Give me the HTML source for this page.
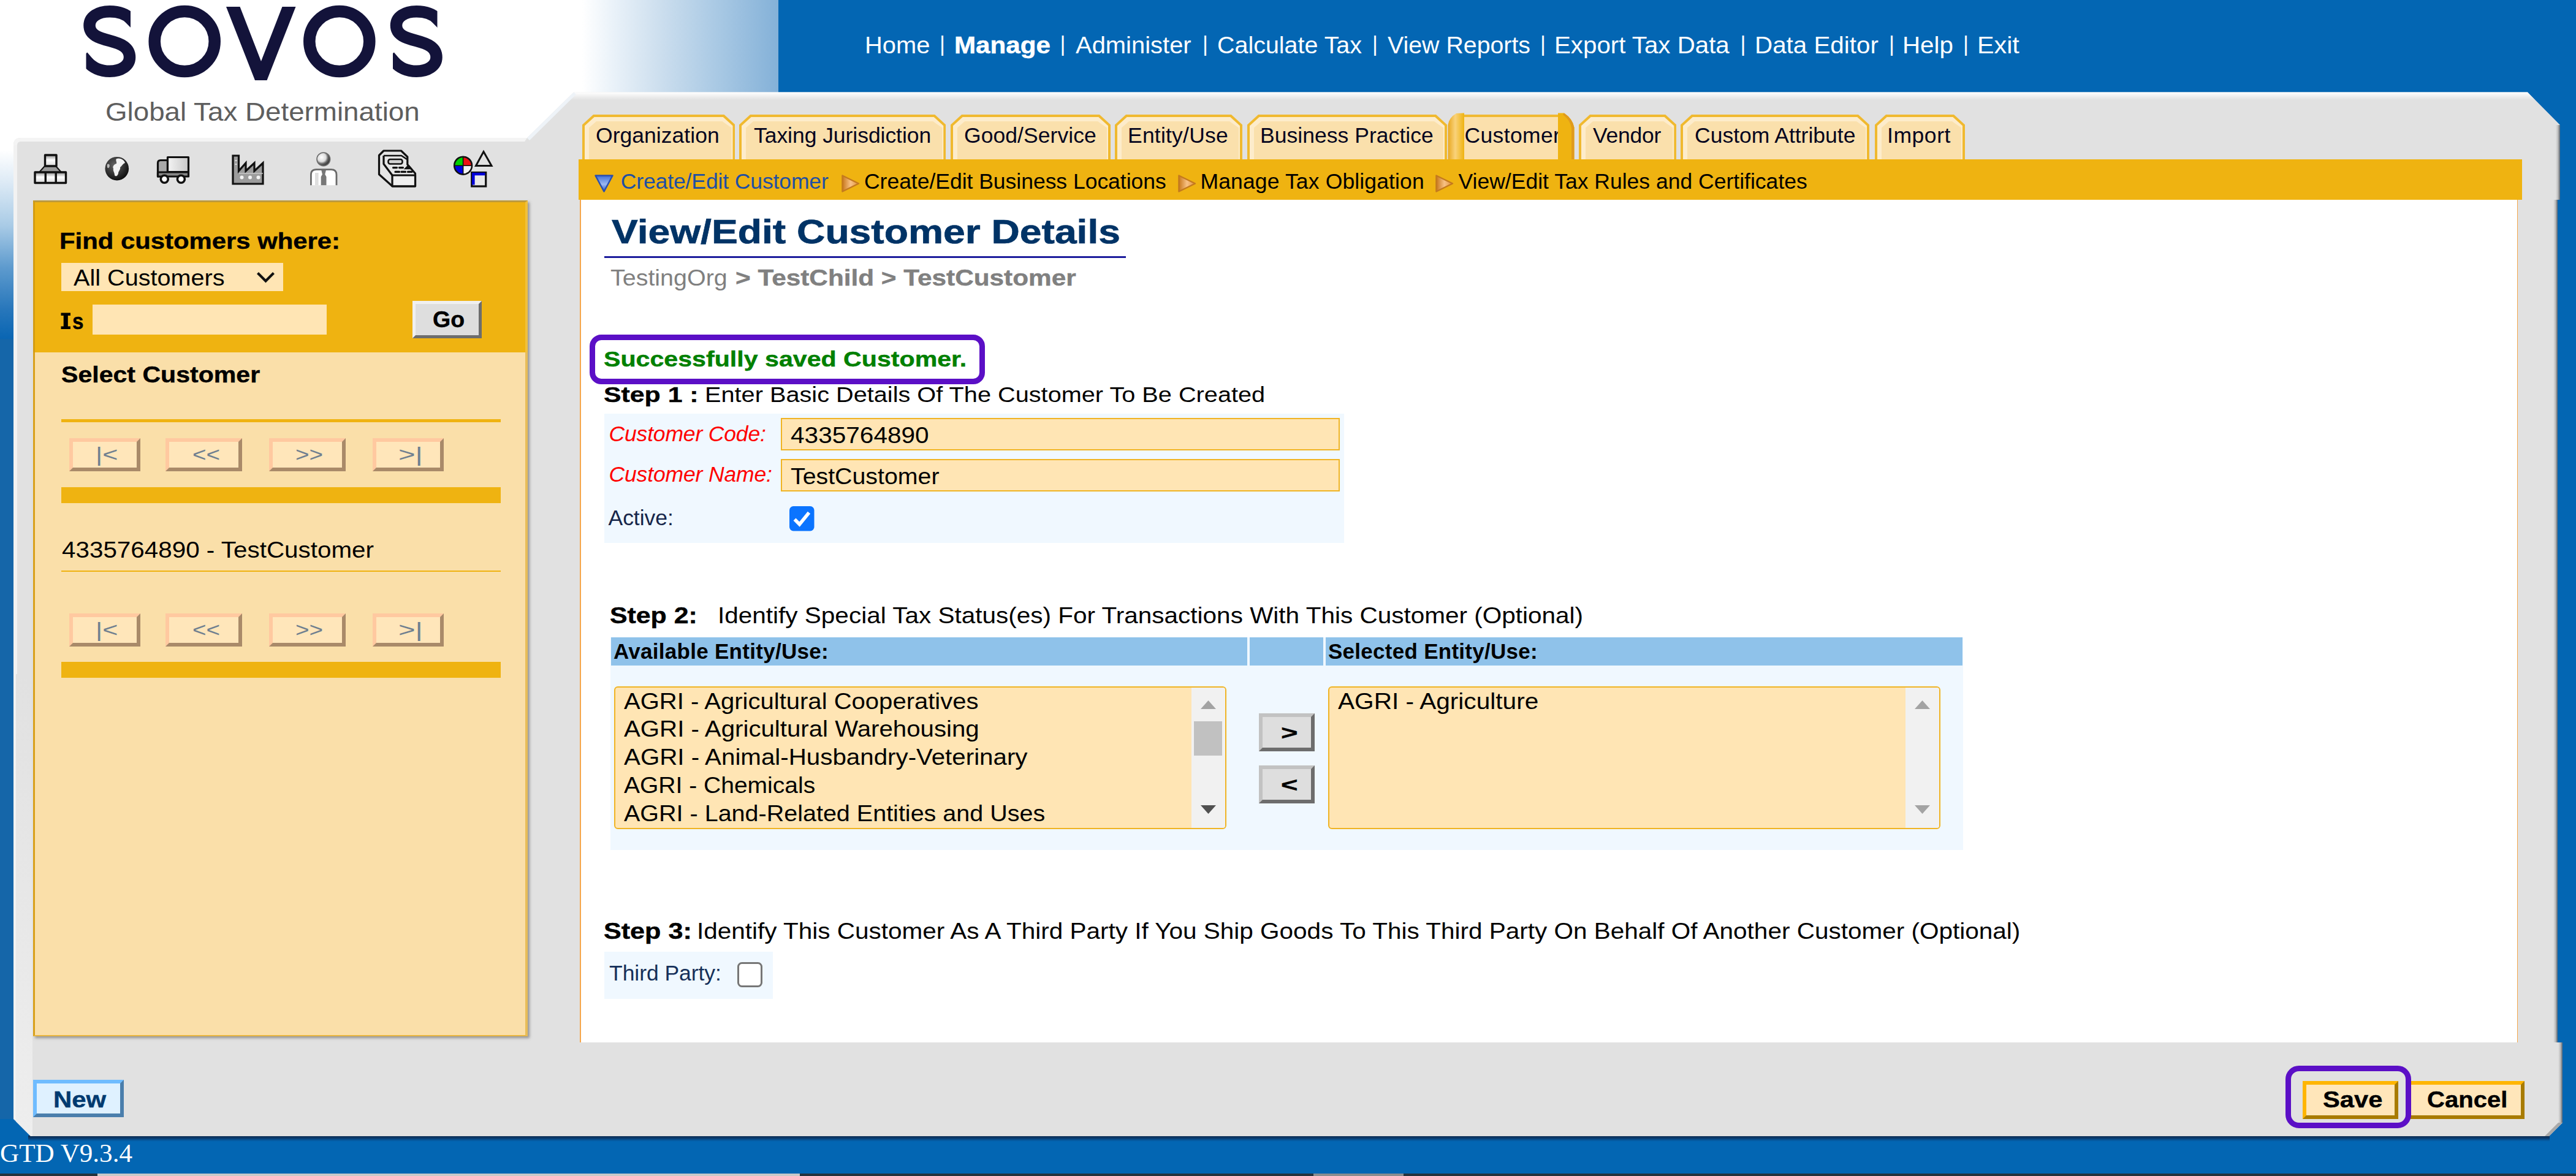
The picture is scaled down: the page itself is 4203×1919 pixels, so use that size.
<!DOCTYPE html>
<html><head><meta charset="utf-8"><title>Sovos GTD - View/Edit Customer Details</title>
<style>
html,body{margin:0;padding:0}
body{background:#0366b3;font-family:"Liberation Sans",sans-serif}
#root{width:4203px;height:1919px;overflow:hidden;position:relative;background:#0366b3}
.a{position:absolute;box-sizing:border-box}
.t{position:absolute;white-space:pre;line-height:1;transform-origin:0 50%;font-family:"Liberation Sans",sans-serif}
.tab{position:absolute;box-sizing:border-box;top:187px;height:73px;background:#fbe0ac;border:3px solid #f0b932;border-bottom:none;border-radius:14px 14px 0 0;box-shadow:inset 3px 3px 0 #fdedcc,inset -3px 0 0 #fdedcc}
.pb{position:absolute;box-sizing:border-box;height:54px;background:#ffe6ba;border:6px solid;border-color:#ffc9a0 #a98a69 #a98a69 #ffc9a0}
.gb{position:absolute;box-sizing:border-box;background:#dedede;border:6px solid;border-color:#c2c2c2 #6d6d6d #6d6d6d #c2c2c2}
.inp{position:absolute;box-sizing:border-box;background:#ffe5b4;border:2.5px solid #f0b424}
.lb{position:absolute;box-sizing:border-box;background:#ffe5b4;border:2.5px solid #f0b424;border-radius:6px;overflow:hidden}
</style></head><body><div id="root">
<!-- header / backgrounds -->
<div class="a" style="left:0;top:0;width:1270px;height:151px;background:linear-gradient(to right,#fff 0,#fff 950px,#eaf2f9 1000px,#cfe0ef 1070px,#a9c9e4 1170px,#84b1d8 1270px)"></div>
<div class="a" style="left:0;top:150px;width:960px;height:1676px;background:linear-gradient(to bottom,#fff 0,#fff 95px,#dbe9f5 150px,#a9cbe6 218px,#5e9bce 286px,#2877bb 354px,#0a66b3 402px,#1566a9 405px,#1566a9 100%)"></div>
<!-- main grey panel -->
<svg class="a" style="left:0;top:0" width="4203" height="1919" viewBox="0 0 4203 1919">
<defs>
<linearGradient id="sh" x1="0" y1="0" x2="0" y2="1"><stop offset="0" stop-color="#0e2646" stop-opacity="1"/><stop offset=".5" stop-color="#0a3566" stop-opacity=".8"/><stop offset="1" stop-color="#0a4a8a" stop-opacity="0"/></linearGradient>
<linearGradient id="hl" x1="0" y1="0" x2="0" y2="1"><stop offset="0" stop-color="#fff"/><stop offset="1" stop-color="#e1e1e1"/></linearGradient>
</defs>
<rect x="46" y="1853" width="4114" height="10" fill="url(#sh)"/>
<path d="M34,225 L860,225 L936,150.5 L4124,150.5 L4177,204 L4177,326 L4173,326 L4173,1701 L4181,1701 L4181,1832 L4159,1854 L50,1854 L22,1826 L22,237 Q22,225 34,225 Z" fill="#e1e1e1"/>
<path d="M936,150.5 L4124,150.5 L4136,163 L924,163 Z" fill="url(#hl)"/>
<linearGradient id="re" x1="0" y1="0" x2="1" y2="0"><stop offset="0" stop-color="#e1e1e1"/><stop offset=".5" stop-color="#bdbdbd"/><stop offset="1" stop-color="#5e6670"/></linearGradient>
<rect x="4170" y="204" width="7" height="122" fill="url(#re)"/><rect x="4166" y="326" width="7" height="1375" fill="url(#re)"/><rect x="4174" y="1701" width="7" height="131" fill="url(#re)"/>
<path d="M4181,1832 L4159,1854 L4152,1854 L4174,1832 Z" fill="#a9a9a9"/>
<path d="M34,225 L860,225 L856,231 L34,231 Q28,231 28,237 L22,237 Q22,225 34,225 Z" fill="#f4f4f4"/>
<path d="M860,225 L936,150.5 L940,154 L864,229 Z" fill="#eef3f8"/>
<path d="M22,237 L28,237 L28,1830 L22,1826 Z" fill="#f2f2f2"/>
<linearGradient id="lg2" x1="0" y1="0" x2="0" y2="1"><stop offset="0" stop-color="#e1e1e1"/><stop offset="1" stop-color="#eeeeee"/></linearGradient>
<path d="M26,1100 L53,1100 L53,1854 L50,1854 L26,1830 Z" fill="url(#lg2)"/>
</svg>
<!-- bottom window strip -->
<div class="a" style="left:0;top:1915px;width:4203px;height:4px;background:#26333d"></div>
<div class="a" style="left:159px;top:1915px;width:1146px;height:4px;background:#c9c9c9"></div>
<div class="a" style="left:2143px;top:1915px;width:147px;height:4px;background:#8a8d90"></div>
<svg class="a" style="left:120px;top:0" width="640" height="145" viewBox="120 0 640 145">
<defs><clipPath id="sc"><rect x="130" y="0" width="83" height="67"/><rect x="140.5" y="67" width="90" height="70"/></clipPath>
<path id="sS" clip-path="url(#sc)" d="M221,39 L213,31 C204,21 192,18.7 179,18.7 C160,18.7 146,27.5 146,41.5 C146,57 161,62 179,66.5 C198,71.5 211.5,77.5 211.5,93.5 C211.5,107.5 197,116.3 179,116.3 C164,116.3 151,110.5 142,100 L135,92"/></defs>
<g fill="none" stroke="#13133a" stroke-width="19.5">
<use href="#sS"/>
<circle cx="301.2" cy="67.5" r="49"/>
<circle cx="553.8" cy="67.5" r="49"/>
<use href="#sS" x="500.5"/>
</g>
<path d="M369,11 L391.5,11 L426,100 L460.5,11 L482.5,11 L435.5,131 L416,131 Z" fill="#13133a"/>
</svg>

<!-- toolbar icons -->
<svg class="a" style="left:50px;top:240px" width="770" height="72" viewBox="50 240 770 72">
<defs>
<linearGradient id="bx" x1="0" y1="0" x2="0" y2="1"><stop offset="0" stop-color="#8c8c8c"/><stop offset=".45" stop-color="#fff"/><stop offset="1" stop-color="#d8d8d8"/></linearGradient>
<radialGradient id="gl" cx=".4" cy=".35" r=".7"><stop offset="0" stop-color="#666"/><stop offset="1" stop-color="#0a0a0a"/></radialGradient>
<radialGradient id="hd" cx=".36" cy=".36" r=".78"><stop offset="0" stop-color="#fff"/><stop offset=".42" stop-color="#dcdcdc"/><stop offset=".62" stop-color="#666"/><stop offset="1" stop-color="#0c0c0c"/></radialGradient>
<linearGradient id="cg" x1="0" y1="0" x2="1" y2="0"><stop offset="0" stop-color="#f4f4f4"/><stop offset="1" stop-color="#c8c8c8"/></linearGradient>
</defs>
<!-- 1 org chart -->
<g stroke="#111" stroke-width="3.4" stroke-linejoin="round">
<path d="M73,271 L64,281 L100,281 L91,271 Z" fill="#9a9a9a" stroke-width="2"/>
<rect x="73.5" y="253" width="18.5" height="18" fill="url(#bx)"/>
<rect x="57" y="281" width="50.5" height="17.5" fill="url(#bx)"/>
<path d="M74.3,281 V298.5 M91.2,281 V298.5" fill="none"/>
</g>
<!-- 2 globe -->
<circle cx="190.8" cy="275.2" r="19.3" fill="url(#gl)"/>
<path d="M190,259 C196,257 203,261 204,266 C200,267 199,271 196,273 C197,277 193,279 193,283 C192,287 189,289 187,286 C187,281 184,279 185,275 C183,272 186,268 190,267 C191,264 188,262 190,259 Z" fill="#f2f2f2"/>
<path d="M175,268 C178,266 180,270 178,273 C176,276 174,273 175,268 Z" fill="#bbb"/>
<!-- 3 truck -->
<g stroke="#111" stroke-width="3.2" stroke-linejoin="round">
<path d="M257.5,288 L257.5,266 Q257.5,261.5 262,261.5 L273.5,261.5 L273.5,288 Z" fill="#a8a8a8"/>
<rect x="273.5" y="256.5" width="34" height="24" fill="url(#cg)"/>
<path d="M257.5,281 L307.5,281 L307.5,288 L257.5,288 Z" fill="#888"/>
<circle cx="268.3" cy="292.3" r="6" fill="#fff" stroke-width="3.6"/>
<circle cx="295.4" cy="292.3" r="6" fill="#fff" stroke-width="3.6"/>
</g>
<!-- 4 factory -->
<g stroke="#111" stroke-width="3.2" stroke-linejoin="miter">
<path d="M380,300 L380,254 L389.5,254 L389.5,279 L401,266 L401,279 L415,266 L415,279 L429,266 L429,300 Z" fill="#9c9c9c"/>
</g>
<path d="M383.5,262 h3 M383.5,268 h3" stroke="#ddd" stroke-width="2"/>
<g fill="#f4f4f4"><circle cx="394.5" cy="289.5" r="3"/><circle cx="408" cy="289.5" r="3"/><circle cx="421.5" cy="289.5" r="3"/></g>
<path d="M390,283 L429,283" stroke="#c8c8c8" stroke-width="1.6"/>
<!-- 5 person -->
<circle cx="527.8" cy="259.8" r="10.8" fill="url(#hd)" stroke="#6a6a6a" stroke-width="1.6"/>
<path d="M507.4,302.3 L507.4,285 Q507.4,276.6 516,276.6 L540.4,276.6 Q549,276.6 549,285 L549,302.3" fill="#fff" stroke="#6a6a6a" stroke-width="2.8"/>
<rect x="514" y="282" width="5.6" height="20.3" fill="#dedede"/>
<path d="M524.3,277.8 h7.6 l-1.6,6.6 l2.2,4.2 v13.7 h-8.8 v-13.7 l2.2,-4.2 Z" fill="#777"/>
<!-- 6 cash register -->
<g stroke="#111" stroke-width="3.2" stroke-linejoin="round" fill="#e6e6e6">
<path d="M618.5,253.5 L626,246 L654.5,246 L664.8,256 L664.8,268.5 L677.5,283 L677.5,303.8 L640,303.8 L618.5,284.5 Z"/>
<path d="M626,254 L626,267.5 L640,286" fill="none"/>
<path d="M626,254 L655,254 L664,260" fill="none" stroke-width="2.6"/>
<path d="M626,267.5 L664.8,268.5" fill="none" stroke-width="0"/>
<rect x="640" y="286" width="37.5" height="17.8" fill="#efefef"/>
<rect x="633.5" y="260" width="23" height="7.5" rx="3" fill="#d4d4d4" stroke-width="2.6"/>
</g>
<path d="M641.5,273.6 h6 M651.5,273.6 h6 M662.5,274.6 l4,-4 l3.5,4 Z M645,280.4 h6.5 M655,280.4 h6.5 M665.5,280.4 h6.5" stroke="#111" stroke-width="3.2" stroke-linecap="round" fill="#111"/>
<!-- 7 shapes -->
<g stroke="#111" stroke-width="2.6">
<path d="M755.6,270.2 L755.6,255.8 A14.4,14.4 0 0 0 741.2,270.2 Z" fill="#00d000" stroke="none"/>
<path d="M755.6,270.2 L770,270.2 A14.4,14.4 0 0 0 755.6,255.8 Z" fill="#ee1111" stroke="none"/>
<path d="M755.6,270.2 L741.2,270.2 A14.4,14.4 0 0 0 755.6,284.6 Z" fill="#0000e0" stroke="none"/>
<path d="M755.6,270.2 L755.6,284.6 A14.4,14.4 0 0 0 770,270.2 Z" fill="#f2f2f2" stroke="none"/>
<circle cx="755.6" cy="270.2" r="14.4" fill="none"/>
<path d="M755.6,256 V284.5 M741.5,270.2 H770" stroke-width="1.6"/>
<path d="M789,247.5 L802,270.5 L776.5,270.5 Z" fill="#e1e1e1" stroke-width="3"/>
<rect x="769.7" y="281.5" width="23" height="22.5" fill="#e9e9e9" stroke-width="3.2"/>
<path d="M772.3,301.5 V284 H791.5" fill="none" stroke="#0000d8" stroke-width="4.6"/>
</g>
</svg>

<!-- find / select panel -->
<div class="a" style="left:54px;top:327px;width:807px;height:1364px;background:#fadfa9;box-shadow:3px 3px 4px rgba(90,90,90,.55);border-left:3px solid #d9a01a;border-bottom:2px solid #e9b540;border-right:4px solid #e8bd58"></div>
<div class="a" style="left:54px;top:327px;width:807px;height:248px;background:#efb311;border-left:3px solid #d39c12;border-top:3px solid #bd9a3c;border-right:4px solid #f0c03c"></div>
<div class="a" style="left:100px;top:429px;width:362px;height:46px;background:#ffe5b4"></div>
<svg class="a" style="left:415px;top:440px" width="40" height="26" viewBox="0 0 40 26"><path d="M5.5,5.5 L18.5,18.5 L31.5,5.5" fill="none" stroke="#111" stroke-width="4.2"/></svg>
<div class="a" style="left:151px;top:497px;width:382px;height:49px;background:#ffe5b4"></div>
<div class="gb" style="left:673px;top:491px;width:113px;height:61px;border-width:5px;border-color:#f0f0f0 #6d6d6d #6d6d6d #f0f0f0"></div>
<div class="a" style="left:100px;top:684px;width:717px;height:5px;background:#efb311"></div>
<div class="pb" style="left:113px;top:715px;width:116px"></div>
<div class="pb" style="left:270px;top:715px;width:125px"></div>
<div class="pb" style="left:439px;top:715px;width:125px"></div>
<div class="pb" style="left:608px;top:715px;width:116px"></div>
<div class="a" style="left:100px;top:795px;width:717px;height:26px;background:#efb311"></div>
<div class="a" style="left:100px;top:931px;width:717px;height:2px;background:#efb311"></div>
<div class="pb" style="left:113px;top:1001px;width:116px"></div>
<div class="pb" style="left:270px;top:1001px;width:125px"></div>
<div class="pb" style="left:439px;top:1001px;width:125px"></div>
<div class="pb" style="left:608px;top:1001px;width:116px"></div>
<div class="a" style="left:100px;top:1080px;width:717px;height:26px;background:#efb311"></div>
<!-- New button -->
<div class="a" style="left:54px;top:1762px;width:148px;height:61px;background:#dff1ff;border:6px solid;border-color:#6fbcff #4a7eac #4a7eac #6fbcff"></div>
<svg class="a" style="left:98px;top:509px" width="20" height="30" viewBox="98 509 20 30"><path d="M99.5,510.5 H115 V515 H110.8 V532.5 H115 V537 H99.5 V532.5 H103.7 V515 H99.5 Z" fill="#000"/></svg>

<!-- tabs -->
<svg class="a" style="left:949.5px;top:186.5px" width="249.5" height="73.5"><polygon points="0,73.5 0,16.5 18,0 231.5,0 249.5,16.5 249.5,73.5" fill="#f0b92f"/><polygon points="4,73.5 4,18.2 19.7,4 229.8,4 245.5,18.2 245.5,73.5" fill="#fdeccb"/><polygon points="11,73.5 11,21.5 23,11 228.5,11 243.5,21.5 243.5,73.5" fill="#fae0ac"/></svg>
<svg class="a" style="left:1205.7px;top:186.5px" width="337.3" height="73.5"><polygon points="0,73.5 0,16.5 18,0 319.3,0 337.3,16.5 337.3,73.5" fill="#f0b92f"/><polygon points="4,73.5 4,18.2 19.7,4 317.6,4 333.3,18.2 333.3,73.5" fill="#fdeccb"/><polygon points="11,73.5 11,21.5 23,11 316.3,11 331.3,21.5 331.3,73.5" fill="#fae0ac"/></svg>
<svg class="a" style="left:1550.5px;top:186.5px" width="261.0" height="73.5"><polygon points="0,73.5 0,16.5 18,0 243.0,0 261.0,16.5 261.0,73.5" fill="#f0b92f"/><polygon points="4,73.5 4,18.2 19.7,4 241.3,4 257.0,18.2 257.0,73.5" fill="#fdeccb"/><polygon points="11,73.5 11,21.5 23,11 240.0,11 255.0,21.5 255.0,73.5" fill="#fae0ac"/></svg>
<svg class="a" style="left:1819px;top:186.5px" width="208.0" height="73.5"><polygon points="0,73.5 0,16.5 18,0 190.0,0 208.0,16.5 208.0,73.5" fill="#f0b92f"/><polygon points="4,73.5 4,18.2 19.7,4 188.3,4 204.0,18.2 204.0,73.5" fill="#fdeccb"/><polygon points="11,73.5 11,21.5 23,11 187.0,11 202.0,21.5 202.0,73.5" fill="#fae0ac"/></svg>
<svg class="a" style="left:2034.5px;top:186.5px" width="326.0" height="73.5"><polygon points="0,73.5 0,16.5 18,0 308.0,0 326.0,16.5 326.0,73.5" fill="#f0b92f"/><polygon points="4,73.5 4,18.2 19.7,4 306.3,4 322.0,18.2 322.0,73.5" fill="#fdeccb"/><polygon points="11,73.5 11,21.5 23,11 305.0,11 320.0,21.5 320.0,73.5" fill="#fae0ac"/></svg>
<svg class="a" style="left:2575.7px;top:186.5px" width="159.3" height="73.5"><polygon points="0,73.5 0,16.5 18,0 141.3,0 159.3,16.5 159.3,73.5" fill="#f0b92f"/><polygon points="4,73.5 4,18.2 19.7,4 139.6,4 155.3,18.2 155.3,73.5" fill="#fdeccb"/><polygon points="11,73.5 11,21.5 23,11 138.3,11 153.3,21.5 153.3,73.5" fill="#fae0ac"/></svg>
<svg class="a" style="left:2742px;top:186.5px" width="308.0" height="73.5"><polygon points="0,73.5 0,16.5 18,0 290.0,0 308.0,16.5 308.0,73.5" fill="#f0b92f"/><polygon points="4,73.5 4,18.2 19.7,4 288.3,4 304.0,18.2 304.0,73.5" fill="#fdeccb"/><polygon points="11,73.5 11,21.5 23,11 287.0,11 302.0,21.5 302.0,73.5" fill="#fae0ac"/></svg>
<svg class="a" style="left:3059px;top:186.5px" width="147.0" height="73.5"><polygon points="0,73.5 0,16.5 18,0 129.0,0 147.0,16.5 147.0,73.5" fill="#f0b92f"/><polygon points="4,73.5 4,18.2 19.7,4 127.3,4 143.0,18.2 143.0,73.5" fill="#fdeccb"/><polygon points="11,73.5 11,21.5 23,11 126.0,11 141.0,21.5 141.0,73.5" fill="#fae0ac"/></svg>
<!-- active tab -->
<div class="a" style="left:2385px;top:187px;width:160px;height:73px;background:#fbe0ac;border-top:4px solid #f0b932"></div>
<svg class="a" style="left:2360px;top:182px;z-index:2" width="212" height="78" viewBox="0 0 212 78">
<defs><linearGradient id="ag" x1="0" y1="0" x2="1" y2="0"><stop offset="0" stop-color="#e9a820"/><stop offset=".45" stop-color="#f9d27a"/><stop offset="1" stop-color="#efb311"/></linearGradient></defs>
<path d="M2.5,78 L2.5,22 Q4,10 16,3 L29,2.5 L29,78 Z" fill="url(#ag)"/>
<path d="M182,78 L182,2.5 L192,2.5 Q206,12 208.5,26 L208.5,78 Z" fill="#efb311"/>
<path d="M192,2.5 Q206,12 208.5,26 L208.5,78 L204,78 L204,27 Q202,14 190,5 Z" fill="#e09a1c"/>
</svg>
<!-- gold sub-nav bar -->
<div class="a" style="left:944px;top:260px;width:3170.5px;height:66px;background:#efb311"></div>
<svg class="a" style="left:968px;top:283px" width="36" height="34" viewBox="0 0 36 34">
<defs><linearGradient id="bt" x1="0" y1="0" x2="0" y2="1"><stop offset="0" stop-color="#3f6fd6"/><stop offset=".55" stop-color="#9db9f2"/><stop offset="1" stop-color="#2c56b8"/></linearGradient></defs>
<path d="M3.5,3.5 L31.5,3.5 L17.5,29.5 Z" fill="url(#bt)" stroke="#2a4fae" stroke-width="2.5" stroke-linejoin="round"/></svg>
<svg width="0" height="0" style="position:absolute"><defs>
<linearGradient id="ot" x1="0" y1="0" x2="1" y2="0"><stop offset="0" stop-color="#c9781c"/><stop offset=".5" stop-color="#f8c184"/><stop offset="1" stop-color="#e0923a"/></linearGradient>
<symbol id="rt" viewBox="0 0 34 34"><path d="M3.5,3.5 L30,16.5 L3.5,29.5 Z" fill="url(#ot)" stroke="#c47a1e" stroke-width="2.5" stroke-linejoin="round"/></symbol></defs></svg>
<svg class="a" style="left:1371px;top:283px" width="34" height="34"><use href="#rt"/></svg>
<svg class="a" style="left:1920px;top:283px" width="34" height="34"><use href="#rt"/></svg>
<svg class="a" style="left:2340px;top:283px" width="34" height="34"><use href="#rt"/></svg>

<!-- white content area -->
<div class="a" style="left:946px;top:326px;width:3162px;height:1375px;background:#fff;border-left:2px solid #f5a64c;border-right:1.5px solid #f5a64c"></div>
<!-- title underline -->
<div class="a" style="left:986px;top:417.5px;width:851px;height:3px;background:#1c1c9c"></div>
<!-- step 1 form -->
<div class="a" style="left:986px;top:675px;width:1207px;height:211px;background:#f0f8ff"></div>
<div class="inp" style="left:1274px;top:682px;width:912px;height:53px"></div>
<div class="inp" style="left:1274px;top:749px;width:912px;height:53px"></div>
<svg class="a" style="left:1287.5px;top:826px" width="41" height="41" viewBox="0 0 41 41"><rect x="0" y="0" width="40.5" height="40.5" rx="6.5" fill="#0b74ff"/><path d="M8.5,21.5 L16.5,29.5 L32,10.5" fill="none" stroke="#fff" stroke-width="5.6"/></svg>
<!-- step 2 -->
<div class="a" style="left:995.5px;top:1039.5px;width:2207.5px;height:347.5px;background:#f0f8ff"></div>
<div class="a" style="left:997px;top:1039.5px;width:1038px;height:46.5px;background:#8fc2ea"></div>
<div class="a" style="left:2039px;top:1039.5px;width:120px;height:46.5px;background:#8fc2ea"></div>
<div class="a" style="left:2163px;top:1039.5px;width:1039px;height:46.5px;background:#8fc2ea"></div>
<div class="lb" style="left:1002px;top:1119.5px;width:998.5px;height:233px">
 <div class="a" style="right:0;top:0;width:55px;height:100%;background:#f1f1f1"></div>
 <div class="a" style="right:4.3px;top:55.5px;width:46.7px;height:55.5px;background:#c1c1c1"></div>
 <svg class="a" style="right:15px;top:21.5px" width="25" height="14"><path d="M0,14 L12.5,0 L25,14 Z" fill="#a3a3a3"/></svg>
 <svg class="a" style="right:15px;top:192.5px" width="25" height="14"><path d="M0,0 L12.5,14 L25,0 Z" fill="#505050"/></svg>
</div>
<div class="gb" style="left:2054px;top:1164px;width:91px;height:62px"></div>
<div class="gb" style="left:2054px;top:1248.5px;width:91px;height:62px"></div>
<div class="lb" style="left:2166.5px;top:1119.5px;width:999.5px;height:233px">
 <div class="a" style="right:0;top:0;width:55px;height:100%;background:#f1f1f1"></div>
 <svg class="a" style="right:15px;top:21.5px" width="25" height="14"><path d="M0,14 L12.5,0 L25,14 Z" fill="#a3a3a3"/></svg>
 <svg class="a" style="right:15px;top:192.5px" width="25" height="14"><path d="M0,0 L12.5,14 L25,0 Z" fill="#a3a3a3"/></svg>
</div>
<!-- step 3 -->
<div class="a" style="left:986px;top:1552.5px;width:275px;height:77.5px;background:#f0f8ff"></div>
<div class="a" style="left:1203px;top:1570px;width:40.5px;height:40.5px;background:#fff;border:3.2px solid #767676;border-radius:7.5px"></div>
<!-- save / cancel -->
<div class="a" style="left:3756.5px;top:1764px;width:156.5px;height:62px;background:#ffe6ba;border:6px solid;border-color:#ffb500 #a87b00 #a87b00 #ffb500"></div>
<div class="a" style="left:3927px;top:1764px;width:192px;height:62px;background:#ffe6ba;border:6px solid;border-color:#ffb500 #a87b00 #a87b00 #ffb500"></div>

<span class="t" style="left:1410.85px;top:55.33px;font-size:38px;color:#ffffff;transform:scaleX(1.0489);">Home</span>
<span class="t" style="left:1532.90px;top:55.10px;font-size:34.5px;color:#ffffff;">|</span>
<span class="t" style="left:1729.40px;top:55.10px;font-size:34.5px;color:#ffffff;">|</span>
<span class="t" style="left:1961.90px;top:55.10px;font-size:34.5px;color:#ffffff;">|</span>
<span class="t" style="left:2238.90px;top:55.10px;font-size:34.5px;color:#ffffff;">|</span>
<span class="t" style="left:2512.90px;top:55.10px;font-size:34.5px;color:#ffffff;">|</span>
<span class="t" style="left:2839.40px;top:55.10px;font-size:34.5px;color:#ffffff;">|</span>
<span class="t" style="left:3081.90px;top:55.10px;font-size:34.5px;color:#ffffff;">|</span>
<span class="t" style="left:3202.90px;top:55.10px;font-size:34.5px;color:#ffffff;">|</span>
<span class="t" style="left:1556.78px;top:55.33px;font-size:38px;color:#ffffff;font-weight:bold;transform:scaleX(1.1095);-webkit-text-stroke:0.46px #ffffff;">Manage</span>
<span class="t" style="left:1755.00px;top:55.33px;font-size:38px;color:#ffffff;transform:scaleX(1.0509);">Administer</span>
<span class="t" style="left:1986.46px;top:55.33px;font-size:38px;color:#ffffff;transform:scaleX(1.0378);">Calculate Tax</span>
<span class="t" style="left:2264.00px;top:55.33px;font-size:38px;color:#ffffff;transform:scaleX(1.0343);">View Reports</span>
<span class="t" style="left:2535.82px;top:55.33px;font-size:38px;color:#ffffff;transform:scaleX(1.0597);">Export Tax Data</span>
<span class="t" style="left:2862.81px;top:55.33px;font-size:38px;color:#ffffff;transform:scaleX(1.0617);">Data Editor</span>
<span class="t" style="left:3104.32px;top:55.33px;font-size:38px;color:#ffffff;transform:scaleX(1.0605);">Help</span>
<span class="t" style="left:3225.74px;top:55.33px;font-size:38px;color:#ffffff;transform:scaleX(1.0855);">Exit</span>
<span class="t" style="left:171.82px;top:161.95px;font-size:42px;color:#5e5e5e;transform:scaleX(1.0891);">Global Tax Determination</span>
<span class="t" style="left:972.00px;top:204.25px;font-size:35.5px;color:#05051e;letter-spacing:0.041px;">Organization</span>
<span class="t" style="left:1230.00px;top:204.25px;font-size:35.5px;color:#05051e;letter-spacing:-0.046px;">Taxing Jurisdiction</span>
<span class="t" style="left:1573.00px;top:204.25px;font-size:35.5px;color:#05051e;letter-spacing:0.059px;">Good/Service</span>
<span class="t" style="left:1840.00px;top:204.25px;font-size:35.5px;color:#05051e;letter-spacing:0.218px;">Entity/Use</span>
<span class="t" style="left:2056.00px;top:204.25px;font-size:35.5px;color:#05051e;letter-spacing:0.037px;">Business Practice</span>
<span class="t" style="left:2599.00px;top:204.25px;font-size:35.5px;color:#05051e;letter-spacing:-0.239px;">Vendor</span>
<span class="t" style="left:2765.00px;top:204.25px;font-size:35.5px;color:#05051e;">Custom Attribute</span>
<span class="t" style="left:3079.00px;top:204.25px;font-size:35.5px;color:#05051e;letter-spacing:0.551px;">Import</span>
<span class="t" style="left:1012.75px;top:278.95px;font-size:35.5px;color:#1f4fa3;letter-spacing:-0.119px;">Create/Edit Customer</span>
<span class="t" style="left:1410.00px;top:278.95px;font-size:35.5px;color:#000;letter-spacing:-0.020px;">Create/Edit Business Locations</span>
<span class="t" style="left:1958.50px;top:278.95px;font-size:35.5px;color:#000;letter-spacing:0.138px;">Manage Tax Obligation</span>
<span class="t" style="left:2379.50px;top:278.95px;font-size:35.5px;color:#000;letter-spacing:0.009px;">View/Edit Tax Rules and Certificates</span>
<span class="t" style="left:997.50px;top:350.10px;font-size:56px;color:#003366;font-weight:bold;transform:scaleX(1.1463);-webkit-text-stroke:0.67px #003366;">View/Edit Customer Details</span>
<span class="t" style="left:995.50px;top:435.53px;font-size:36px;color:#808080;transform:scaleX(1.0956);">TestingOrg</span>
<span class="t" style="left:1199.82px;top:435.53px;font-size:36px;color:#808080;font-weight:bold;transform:scaleX(1.1754);-webkit-text-stroke:0.43px #808080;">&gt; TestChild &gt; TestCustomer</span>
<span class="t" style="left:984.84px;top:568.95px;font-size:35.5px;color:#008000;font-weight:bold;transform:scaleX(1.1590);-webkit-text-stroke:0.43px #008000;">Successfully saved Customer.</span>
<span class="t" style="left:984.79px;top:626.95px;font-size:35.5px;color:#000;font-weight:bold;transform:scaleX(1.2057);-webkit-text-stroke:0.43px #000;">Step 1 :</span>
<span class="t" style="left:1149.76px;top:626.95px;font-size:35.5px;color:#000;transform:scaleX(1.1182);">Enter Basic Details Of The Customer To Be Created</span>
<span class="t" style="left:993.50px;top:690.95px;font-size:35.5px;color:#ff0000;font-style:italic;letter-spacing:-0.162px;">Customer Code:</span>
<span class="t" style="left:993.50px;top:757.25px;font-size:35.5px;color:#ff0000;font-style:italic;letter-spacing:-0.149px;">Customer Name:</span>
<span class="t" style="left:992.50px;top:827.65px;font-size:35.5px;color:#16264a;letter-spacing:-0.031px;">Active:</span>
<span class="t" style="left:1289.50px;top:692.53px;font-size:36px;color:#000;transform:scaleX(1.1270);">4335764890</span>
<span class="t" style="left:1290.00px;top:760.03px;font-size:36px;color:#000;transform:scaleX(1.0919);">TestCustomer</span>
<span class="t" style="left:994.81px;top:987.23px;font-size:36px;color:#000;font-weight:bold;transform:scaleX(1.1892);-webkit-text-stroke:0.43px #000;">Step 2:</span>
<span class="t" style="left:1171.12px;top:987.23px;font-size:36px;color:#000;transform:scaleX(1.1250);">Identify Special Tax Status(es) For Transactions With This Customer (Optional)</span>
<span class="t" style="left:1001.00px;top:1045.37px;font-size:35px;color:#000;font-weight:bold;letter-spacing:0.286px;">Available Entity/Use:</span>
<span class="t" style="left:2167.00px;top:1045.37px;font-size:35px;color:#000;font-weight:bold;letter-spacing:0.271px;">Selected Entity/Use:</span>
<span class="t" style="left:2182.60px;top:1126.53px;font-size:36px;color:#000;transform:scaleX(1.1281);">AGRI - Agriculture</span>
<span class="t" style="left:2089.61px;top:1178.22px;font-size:34px;color:#000;font-weight:bold;transform:scaleX(1.3886);-webkit-text-stroke:0.41px #000;">&gt;</span>
<span class="t" style="left:2089.61px;top:1263.22px;font-size:34px;color:#000;font-weight:bold;transform:scaleX(1.3886);-webkit-text-stroke:0.41px #000;">&lt;</span>
<span class="t" style="left:984.80px;top:1502.03px;font-size:36px;color:#000;font-weight:bold;transform:scaleX(1.1978);-webkit-text-stroke:0.43px #000;">Step 3:</span>
<span class="t" style="left:1137.13px;top:1502.03px;font-size:36px;color:#000;transform:scaleX(1.1248);">Identify This Customer As A Third Party If You Ship Goods To This Third Party On Behalf Of Another Customer (Optional)</span>
<span class="t" style="left:994.00px;top:1570.95px;font-size:35.5px;color:#16305a;letter-spacing:-0.055px;">Third Party:</span>
<span class="t" style="left:96.74px;top:374.68px;font-size:37px;color:#000;font-weight:bold;transform:scaleX(1.1308);-webkit-text-stroke:0.44px #000;">Find customers where:</span>
<span class="t" style="left:119.50px;top:435.53px;font-size:36px;color:#000;transform:scaleX(1.1006);">All Customers</span>
<span class="t" style="left:118.11px;top:505.68px;font-size:37px;color:#000;font-weight:bold;transform:scaleX(0.8947);-webkit-text-stroke:0.44px #000;">s</span>
<span class="t" style="left:706.46px;top:503.53px;font-size:36px;color:#000;font-weight:bold;transform:scaleX(1.0415);-webkit-text-stroke:0.43px #000;">Go</span>
<span class="t" style="left:99.86px;top:593.53px;font-size:36px;color:#000;font-weight:bold;transform:scaleX(1.1409);-webkit-text-stroke:0.43px #000;">Select Customer</span>
<span class="t" style="left:155.69px;top:724.22px;font-size:34px;color:#708090;transform:scaleX(1.2685);">|&lt;</span>
<span class="t" style="left:313.86px;top:724.22px;font-size:34px;color:#708090;transform:scaleX(1.1357);">&lt;&lt;</span>
<span class="t" style="left:481.86px;top:724.22px;font-size:34px;color:#708090;transform:scaleX(1.1357);">&gt;&gt;</span>
<span class="t" style="left:649.61px;top:724.22px;font-size:34px;color:#708090;transform:scaleX(1.3880);">&gt;|</span>
<span class="t" style="left:155.69px;top:1010.22px;font-size:34px;color:#708090;transform:scaleX(1.2685);">|&lt;</span>
<span class="t" style="left:313.86px;top:1010.22px;font-size:34px;color:#708090;transform:scaleX(1.1357);">&lt;&lt;</span>
<span class="t" style="left:481.86px;top:1010.22px;font-size:34px;color:#708090;transform:scaleX(1.1357);">&gt;&gt;</span>
<span class="t" style="left:649.61px;top:1010.22px;font-size:34px;color:#708090;transform:scaleX(1.3880);">&gt;|</span>
<span class="t" style="left:101.00px;top:879.53px;font-size:36px;color:#000;transform:scaleX(1.1220);">4335764890 - TestCustomer</span>
<span class="t" style="left:86.67px;top:1777.03px;font-size:36px;color:#003a70;font-weight:bold;transform:scaleX(1.1639);-webkit-text-stroke:0.43px #003a70;">New</span>
<span class="t" style="left:3790.34px;top:1776.53px;font-size:36px;color:#000;font-weight:bold;transform:scaleX(1.1577);-webkit-text-stroke:0.43px #000;">Save</span>
<span class="t" style="left:3959.89px;top:1776.53px;font-size:36px;color:#000;font-weight:bold;transform:scaleX(1.1125);-webkit-text-stroke:0.43px #000;">Cancel</span>
<span class="t" style="left:-0.03px;top:1860.83px;font-size:42px;color:#ffffff;font-family:'Liberation Serif',serif;transform:scaleX(1.0268);">GTD V9.3.4</span>
<span class="t" style="left:1017.50px;top:1126.53px;font-size:36px;color:#000;transform:scaleX(1.1122);">AGRI - Agricultural Cooperatives</span>
<span class="t" style="left:1017.50px;top:1172.43px;font-size:36px;color:#000;transform:scaleX(1.1173);">AGRI - Agricultural Warehousing</span>
<span class="t" style="left:1017.50px;top:1218.33px;font-size:36px;color:#000;transform:scaleX(1.1195);">AGRI - Animal-Husbandry-Veterinary</span>
<span class="t" style="left:1017.50px;top:1264.23px;font-size:36px;color:#000;transform:scaleX(1.0837);">AGRI - Chemicals</span>
<span class="t" style="left:1017.50px;top:1310.13px;font-size:36px;color:#000;transform:scaleX(1.0972);">AGRI - Land-Related Entities and Uses</span>
<span class="t" style="left:2389.50px;top:204.25px;font-size:35.5px;color:#05051e;letter-spacing:0.350px;z-index:1;">Customer</span>
<!-- annotation highlights -->
<div class="a" style="left:962px;top:546px;width:645px;height:81px;border:9px solid #5b0fc6;border-radius:19px;z-index:5"></div>
<div class="a" style="left:3729px;top:1739px;width:205px;height:102px;border:9px solid #5b0fc6;border-radius:22px;z-index:5"></div>

</div></body></html>
